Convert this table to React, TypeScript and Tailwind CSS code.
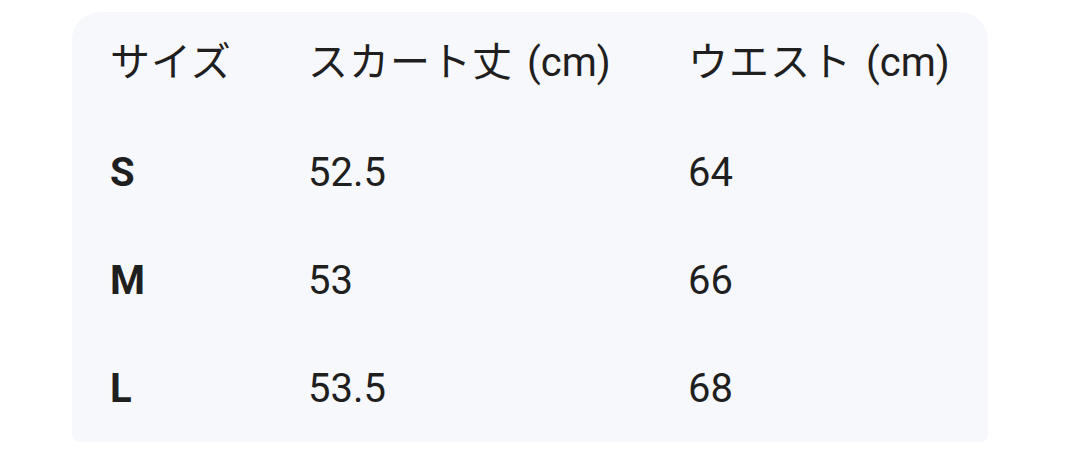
import React from "react";

const rows = [
  { size: "S", length: "52.5", waist: "64" },
  { size: "M", length: "53", waist: "66" },
  { size: "L", length: "53.5", waist: "68" },
];

function Head({ jp, unit }: { jp: string; unit?: string }) {
  return (
    <div className="whitespace-nowrap">
      <span className="tracking-[1px]">{jp}</span>
      {unit && <span className="ml-[14px]">{unit}</span>}
    </div>
  );
}

export default function App() {
  return (
    <div
      className="w-[1073px] h-[450px] bg-white pt-[12px] pl-[72px] overflow-hidden"
      style={{ fontFamily: 'Roboto, "Noto Sans CJK JP", sans-serif' }}
    >
      <div className="w-[916px] h-[430px] bg-[#f7f8fc] rounded-t-[28px] rounded-b-[8px] pl-[38px] text-[#1f1f1f] text-[40px]">
        {/* header */}
        <div className="grid grid-cols-[198px_380px_1fr] h-[107px] pb-[6px] items-center">
          <Head jp="サイズ" />
          <Head jp="スカート丈" unit="(cm)" />
          <Head jp="ウエスト" unit="(cm)" />
        </div>
        {rows.map((row) => (
          <div
            key={row.size}
            className="grid grid-cols-[198px_380px_1fr] h-[108px] items-center"
          >
            <div className="font-bold">{row.size}</div>
            <div>{row.length}</div>
            <div>{row.waist}</div>
          </div>
        ))}
      </div>
    </div>
  );
}
